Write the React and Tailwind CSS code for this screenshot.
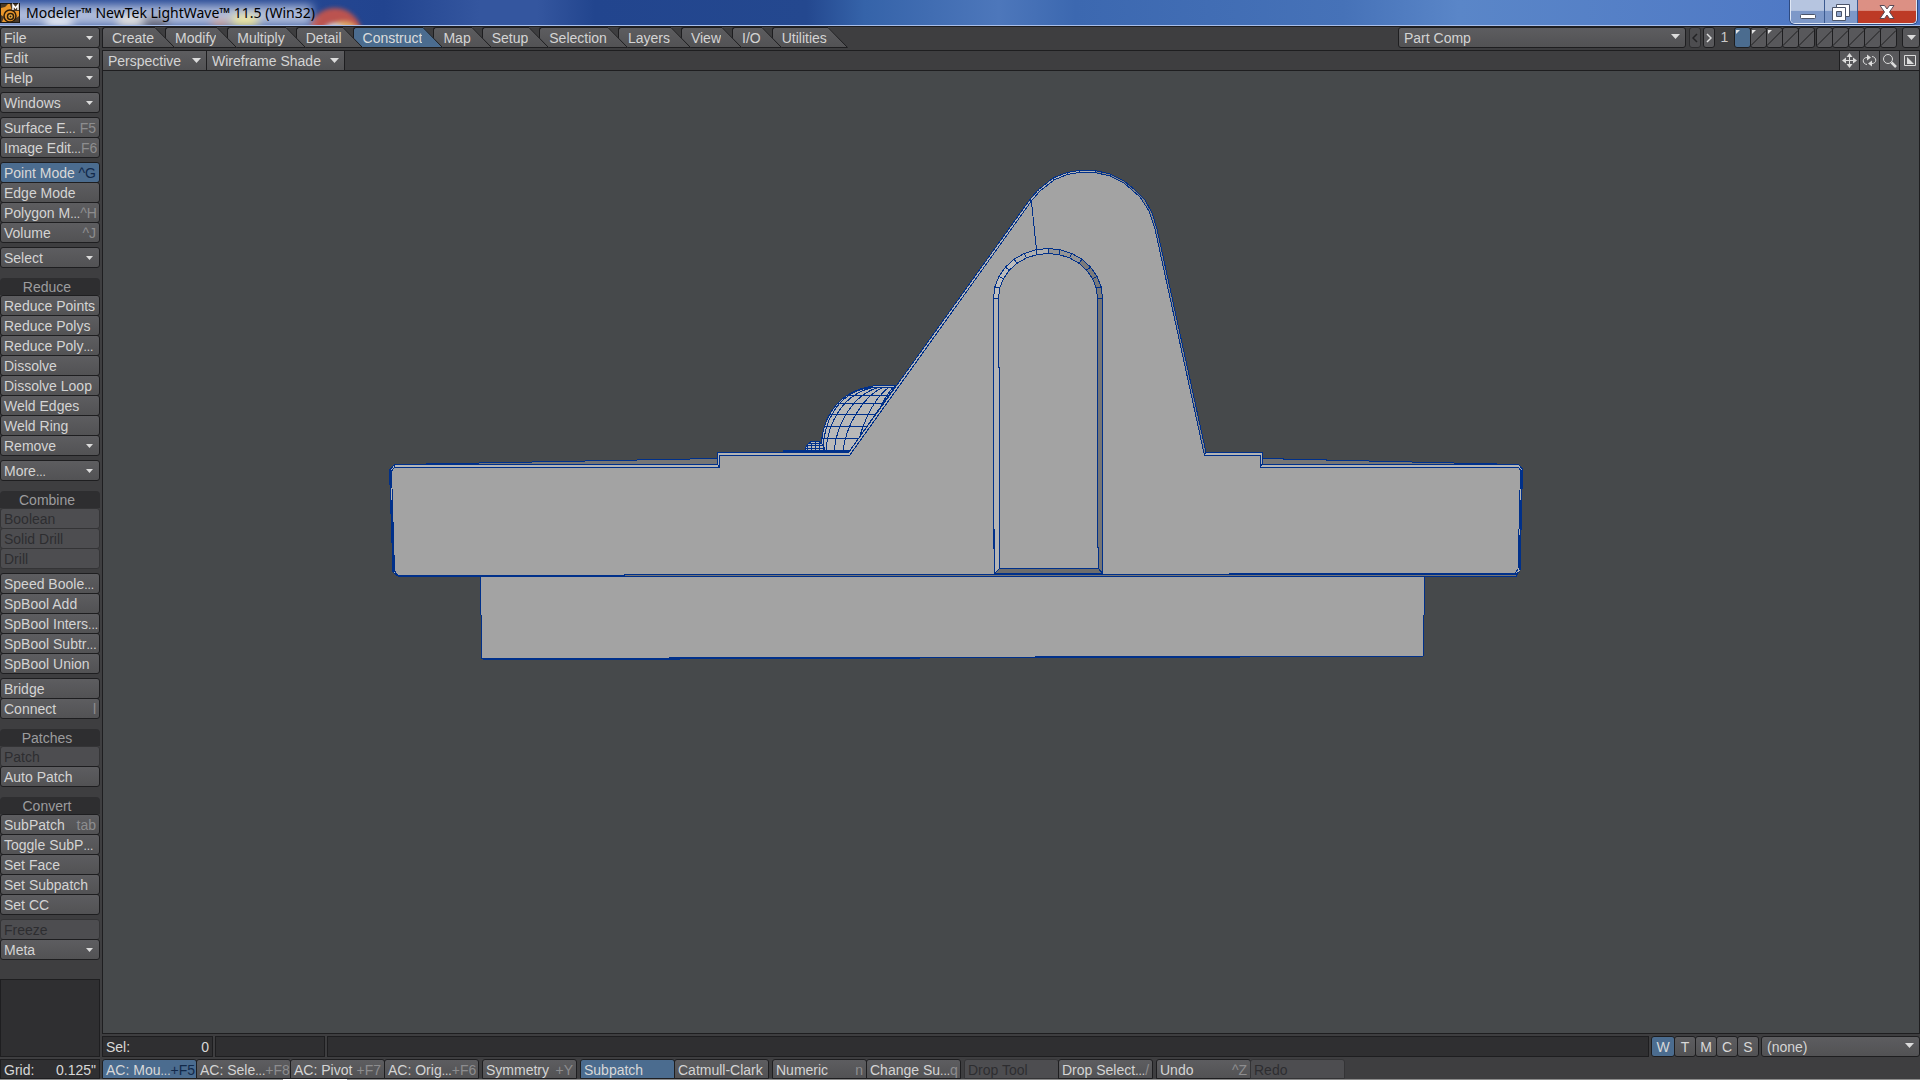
import React, { useState } from 'react';
import clsx from 'clsx';

const sidebar = [
  {
    groups: [
      [{ label: 'File', menu: true }, { label: 'Edit', menu: true }, { label: 'Help', menu: true }],
      [{ label: 'Windows', menu: true }],
      [{ label: 'Surface E', cut: true, hint: 'F5' }, { label: 'Image Edit', cut: true, hint: 'F6' }],
      [
        { label: 'Point Mode', hint: '^G', active: true },
        { label: 'Edge Mode' },
        { label: 'Polygon M', cut: true, hint: '^H' },
        { label: 'Volume', hint: '^J' },
      ],
      [{ label: 'Select', menu: true }],
    ],
  },
  {
    title: 'Reduce',
    groups: [
      [
        { label: 'Reduce Points' },
        { label: 'Reduce Polys' },
        { label: 'Reduce Poly', cut: true },
        { label: 'Dissolve' },
        { label: 'Dissolve Loop' },
        { label: 'Weld Edges' },
        { label: 'Weld Ring' },
        { label: 'Remove', menu: true },
      ],
      [{ label: 'More', cut: true, menu: true }],
    ],
  },
  {
    title: 'Combine',
    groups: [
      [
        { label: 'Boolean', disabled: true },
        { label: 'Solid Drill', disabled: true },
        { label: 'Drill', disabled: true },
      ],
      [
        { label: 'Speed Boole', cut: true },
        { label: 'SpBool Add' },
        { label: 'SpBool Inters', cut: true },
        { label: 'SpBool Subtr', cut: true },
        { label: 'SpBool Union' },
      ],
      [{ label: 'Bridge' }, { label: 'Connect', hint: 'l' }],
    ],
  },
  {
    title: 'Patches',
    groups: [[{ label: 'Patch', disabled: true }, { label: 'Auto Patch' }]],
  },
  {
    title: 'Convert',
    groups: [
      [
        { label: 'SubPatch', hint: 'tab' },
        { label: 'Toggle SubP', cut: true },
        { label: 'Set Face' },
        { label: 'Set Subpatch' },
        { label: 'Set CC' },
      ],
      [{ label: 'Freeze', disabled: true }, { label: 'Meta', menu: true }],
    ],
  },
];

const tabs = ['Create', 'Modify', 'Multiply', 'Detail', 'Construct', 'Map', 'Setup', 'Selection', 'Layers', 'View', 'I/O', 'Utilities'];

const toolbar = [
  [
    { label: 'AC: Mou', cut: true, hint: '+F5', active: true },
    { label: 'AC: Sele', cut: true, hint: '+F8' },
    { label: 'AC: Pivot', hint: '+F7' },
    { label: 'AC: Orig', cut: true, hint: '+F6' },
  ],
  [{ label: 'Symmetry', hint: '+Y' }],
  [{ label: 'Subpatch', active: true }, { label: 'Catmull-Clark' }],
  [{ label: 'Numeric', hint: 'n' }, { label: 'Change Su', cut: true, hint: 'q' }],
  [{ label: 'Drop Tool', disabled: true }, { label: 'Drop Select', cut: true, hint: '/' }],
  [{ label: 'Undo', hint: '^Z' }, { label: 'Redo', disabled: true }],
];

function Arrow({ className }) {
  return (
    <svg viewBox="0 0 9 5" className={clsx('shrink-0 fill-[#dcdcdc]', className)} aria-hidden="true">
      <path d="M0 0H9L4.5 5Z" />
    </svg>
  );
}

function ToolButton({ item, className }) {
  const { label, cut, hint, menu, active, disabled } = item;
  return (
    <button
      type="button"
      disabled={disabled}
      className={clsx(
        'flex items-center justify-between overflow-hidden whitespace-nowrap rounded-[3px] border px-[3px] text-left text-sm leading-4',
        active && 'border-[#1e1e20] bg-[#4b6c8f] text-[#d8d8d8]',
        disabled && 'border-[#343436] bg-[#4d4d50] text-[#2d2d30]',
        !active && !disabled && 'border-[#1e1e20] bg-linear-to-b from-[#5d5d60] to-[#525254] text-[#d4d4d4]',
        className
      )}
    >
      <span>
        {label}
        {cut && <span className="text-xs leading-none">...</span>}
      </span>
      {hint && <span className={active ? 'text-[#12294a]' : 'text-[#8d8d8f]'}>{hint}</span>}
      {menu && <Arrow className="mr-[3px] h-1 w-[7px]" />}
    </button>
  );
}

function Picker({ label, options, className, selectClass }) {
  return (
    <div className={clsx('relative flex', className)}>
      <select
        aria-label={label}
        className={clsx('w-full appearance-none bg-linear-to-b from-[#5d5d60] to-[#525254] pl-[5px] text-sm leading-4 text-[#d4d4d4] outline-none', selectClass)}
      >
        {options.map((o) => (
          <option key={o}>{o}</option>
        ))}
      </select>
      <Arrow className="pointer-events-none absolute right-[6px] top-[7px] h-[5px] w-[9px]" />
    </div>
  );
}

function Tab({ label, active, onClick, z }) {
  return (
    <button type="button" onClick={onClick} className="relative -mr-[10px] flex h-[21px] last:mr-0" style={{ zIndex: z }}>
      <span
        className={clsx(
          'flex h-full items-center rounded-tl-[3px] border-y border-l border-[#1e1e20] pl-[9px] pt-px text-sm leading-4',
          active ? 'bg-[#4b6c8f] text-[#dcdcdc]' : 'bg-linear-to-b from-[#5d5d60] to-[#525254] text-[#d4d4d4]'
        )}
      >
        {label}
      </span>
      <svg viewBox="0 0 21 21" className="h-[21px] w-[21px]" aria-hidden="true">
        <defs>
          <linearGradient id="tabFill" x1="0" y1="0" x2="0" y2="1">
            <stop offset="0" stopColor="#5d5d60" />
            <stop offset="1" stopColor="#525254" />
          </linearGradient>
        </defs>
        <path d="M0 0H1L21 21H0Z" fill={active ? '#4b6c8f' : 'url(#tabFill)'} />
        <path d="M0 .5H1L20.500 20.500H0" fill="none" stroke="#1e1e20" />
      </svg>
    </button>
  );
}

function TitleBar() {
  return (
    <header className="relative flex h-[26px] shrink-0 items-start justify-between overflow-hidden border-b border-[#a9bfea] bg-[#24488f]">
      <svg viewBox="0 0 1920 25" preserveAspectRatio="none" className="absolute inset-0 h-full w-full" aria-hidden="true">
        <defs>
          <linearGradient id="sky" x1="0" y1="0" x2="1" y2="0">
            <stop offset="0" stopColor="#2c4f9c" />
            <stop offset=".2" stopColor="#22448f" />
            <stop offset=".25" stopColor="#34569f" />
            <stop offset=".28" stopColor="#34569f" />
            <stop offset=".31" stopColor="#22458e" />
            <stop offset=".42" stopColor="#24488f" />
            <stop offset=".45" stopColor="#3563a9" />
            <stop offset=".52" stopColor="#4d77bb" />
            <stop offset=".56" stopColor="#3c68b0" />
            <stop offset=".7" stopColor="#4672b8" />
            <stop offset=".76" stopColor="#5a86c8" />
            <stop offset="1" stopColor="#4b74c4" />
          </linearGradient>
          <filter id="soft" x="-20%" y="-80%" width="140%" height="260%">
            <feGaussianBlur stdDeviation="5" />
          </filter>
          <filter id="faint" x="-20%" y="-80%" width="140%" height="260%">
            <feGaussianBlur stdDeviation="2" />
          </filter>
        </defs>
        <path fill="url(#sky)" d="M0 0H1920V25H0Z" />
        <circle cx="335" cy="35" r="27" fill="#bb5350" filter="url(#faint)" />
        <circle cx="344" cy="39" r="18" fill="#dfa868" filter="url(#faint)" />
        <circle cx="334" cy="36" r="13" fill="#c9c6d6" filter="url(#faint)" />
        <g filter="url(#soft)">
          <path fill="#c3cee5" d="M-10 5H312V26H-10Z" opacity=".85" />
          <path fill="#e9e6e0" d="M118 16H142V28H118Z" />
          <path fill="#6f6a70" d="M143 18H168V28H143Z" />
          <path fill="#efe8a0" d="M232 14H258V28H232Z" />
          <path fill="#dfa98a" d="M212 20H228V28H212Z" />
          <path fill="#ffffff" d="M46 19H72V28H46Z" />
        </g>
      </svg>
      <div className="relative flex h-[26px] items-center gap-[6px]">
        <svg viewBox="0 0 20 20" className="h-5 w-5" aria-hidden="true">
          <path fill="#1b1712" d="M0 0H20V20H0Z" />
          <path fill="#e8952b" d="M1 1H19V19H1Z" />
          <path fill="#4b3a28" d="M1 1H8L5 4L1 5ZM10 1H19V8H12ZM1 12L4 14L2 19H1ZM15 16L19 13V19H13Z" />
          <circle cx="10" cy="13" r="6" fill="none" stroke="#2b1c0b" strokeWidth="1.500" />
          <circle cx="10.500" cy="13.500" r="3" fill="#f5b548" stroke="#2b1c0b" strokeWidth="1.500" />
          <circle cx="10.500" cy="13.500" r="1" fill="#2b1c0b" />
          <path d="M13 7V2L15.500 5L18 2V7" fill="none" stroke="#fff" strokeWidth="1.500" />
        </svg>
        <h1 className="whitespace-nowrap font-['Noto_Sans','Open_Sans',sans-serif] text-sm leading-5 text-black">
          Modeler™ NewTek LightWave™ 11.5 (Win32)
        </h1>
      </div>
      <div className="relative mr-[3px] flex h-6 overflow-hidden rounded-b-[5px] border border-t-0 border-[#dfe7f5] ring-1 ring-[#2e4a80]">
        <button type="button" aria-label="Minimize" className="flex w-[34px] items-center justify-center border-r border-[#3b5a90] bg-linear-to-b from-[#b6c5e0] from-45% to-[#7d98c8] to-50%">
          <svg viewBox="0 0 18 18" className="mt-1 h-[18px] w-[18px]">
            <rect x="1.500" y="9.500" width="15" height="4" rx="1" fill="#fff" stroke="#4b5468" />
          </svg>
        </button>
        <button type="button" aria-label="Restore" className="flex w-[33px] items-center justify-center border-r border-[#3b5a90] bg-linear-to-b from-[#b6c5e0] from-45% to-[#7d98c8] to-50%">
          <svg viewBox="0 0 18 18" className="h-[18px] w-[18px]" fill="#fff" stroke="#4b5468">
            <path d="M4.500 1.500H17.500V13.500H4.500Z" />
            <path d="M.5 4.500H13.500V17.500H.5Z" />
            <path d="M4.500 8.500H9.500V13.500H4.500Z" fill="#8fa5cc" />
          </svg>
        </button>
        <button type="button" aria-label="Close" className="flex w-[58px] items-center justify-center bg-linear-to-b from-[#dc9084] from-45% to-[#bd3a26] to-50%">
          <svg viewBox="0 0 18 16" className="h-4 w-[18px]">
            <path d="M2 1.500H6.500L9 5L11.500 1.500H16L11.500 8L16 14.500H11.500L9 11L6.500 14.500H2L6.500 8Z" fill="#fff" stroke="#5a4a55" />
          </svg>
        </button>
      </div>
    </header>
  );
}

function LayerBank({ start, current, onPick }) {
  return (
    <div className="flex">
      {[0, 1, 2, 3, 4].map((i) => {
        const n = start + i;
        const on = n === current;
        return (
          <button
            key={n}
            type="button"
            aria-label={`Layer ${n}`}
            onClick={() => onPick(n)}
            className={clsx('-mr-px h-[21px] w-[17px] rounded-[3px] border border-[#1e1e20]', on ? 'bg-[#4b6c8f]' : 'bg-[#58585b]')}
          >
            <svg viewBox="0 0 15 19" className="h-[19px] w-[15px]" aria-hidden="true">
              {!on && <path d="M0 17.500L15 2.500" stroke="#1e1e20" fill="none" />}
              {n <= 3 && <path d="M1 2H5L1 6Z" fill="#e4e4e4" />}
            </svg>
          </button>
        );
      })}
    </div>
  );
}

// point on the door arch, angle in degrees from the left spring line
function archPoint(rx, ry, deg) {
  const a = (deg * Math.PI) / 180;
  return [1048 - rx * Math.cos(a), 298 - ry * Math.sin(a)];
}

const archSteps = Array.from({ length: 14 }, (_, i) => {
  const a = (i * 180) / 14;
  const b = ((i + 1) * 180) / 14;
  const pts = [archPoint(54.5, 49.5, a), archPoint(54.5, 49.5, b), archPoint(49.5, 44.5, b), archPoint(49.5, 44.5, a)];
  return {
    points: pts.map((p) => p.join(',')).join(' '),
    fill: i < 4 ? '#bdbdbd' : i < 7 ? '#b0b0b0' : i < 10 ? '#959595' : '#7a7a7a',
  };
});

function Model() {
  return (
    <svg viewBox="103 71 1816 962" className="block min-h-0 w-full flex-1 bg-[#46494b]" shapeRendering="crispEdges" stroke="#00308a" fill="none" role="img" aria-label="Perspective view">
      <defs>
        <clipPath id="dome">
          <path d="M821 452C821 415 840 386 885 385H896L849 452Z" />
        </clipPath>
      </defs>

      {/* ball behind the left slope */}
      <path d="M821 452C821 415 840 386 885 385H896L849 452Z" fill="#b9b9b9" />
      <g clipPath="url(#dome)">
        {[387, 395, 403, 414, 426, 438].map((y) => (
          <path key={y} d={`M818 ${y}.5H900`} />
        ))}
        <path d="M823 452C823 424 836 392 872 387M826 452C827 424 843 392 876 387M834 452C836 426 852 394 880 387M843 452C845 428 862 396 884 387M857 452C859 430 872 400 889 387M872 430C876 415 884 398 893 387" />
      </g>
      <path d="M805 451C806 444 810 441 815 441S824 444 825 451Z" fill="#b9b9b9" />
      <path d="M806 448.500H824M807 445.500H823M809 443.500H821M811.500 451V443M815.500 451V441M819.500 451V443M823.500 451V445M807.500 451V445" />
      <path d="M783 451H850" strokeWidth="2" />

      {/* base */}
      <path d="M480.500 576V600L481.500 630V658.500L1423.500 656L1424.500 576Z" fill="#a3a3a3" />
      <path d="M483 659.500H680M552 658.500H920M677 657.500H1240M1035 656.500H1423" />

      {/* far top edges */}
      <path d="M400 464.500L717 458.500V465Z" fill="#757575" />
      <path d="M1262 458.500L1518 464.500H1262Z" fill="#757575" />

      {/* body */}
      <path
        d="M394.500 464.500H717.500V452.500H848.500L1029.500 200L1038 190L1053 178L1067 172.500L1079 170.500H1095L1110 174L1124 181L1135 190L1145 200L1152 213L1157 229L1206 452.500H1262V464.500H1518.500L1522.500 469L1520 571L1516 574.500L1240 576.500H398.500L393 572L389.500 470Z"
        fill="#b4b4b4"
      />
      <path d="M1095 170.500L1110 174L1124 181L1135 190L1145 200L1152 213L1157 229L1206 452.500L1204 455L1155 229L1149 211L1140 197L1124 183L1110 176L1095 172.500Z" fill="#858585" />
      <path d="M398 574.500H1517L1516 576.500H398Z" fill="#757575" />
      <path
        d="M394.500 467.500H719.500V455.500H849.500L961 299.500L1031 201.500L1040 191L1054 180L1067 174.500L1079 172.500H1095L1110 176L1124 183L1140 197L1149 211L1155 229L1204.500 455.500H1260.500V467.500H1518.500L1520.500 470L1518 569L1515 573.500H1230L1229 574.500H625L624 575.500H398L394.500 571L391.500 471Z"
        fill="#a3a3a3"
      />
      <path d="M390 470L394.500 464.500V467.500M717.500 464.500L719.500 467.500M1262 464.500L1260 467.500M390.500 470V505M391.500 500V525M392.500 520V545M393.500 540V572M1521.500 470V510M1520.500 500V540M1519.500 535V570" />
      <path d="M1053 178V180M1067 172V174M1079 170V173M1095 170V173M1110 174V176M1038 190L1040 192M1030 200L1032 202" />
      <path d="M1031.500 202L1036.500 250" />

      {/* door */}
      <path d="M993.500 298V540L994.500 541V573.500L999.500 568.500V368L998.500 367V298Z" fill="#b5b5b5" />
      <path d="M1097.500 298H1102.500V573.500L1098.500 568.500V548L1097.500 547Z" fill="#757575" />
      <path d="M999.500 568.500H1098.500L1102.500 573.500H994.500Z" fill="#6d6d6d" />
      {archSteps.map((s) => (
        <polygon key={s.points} points={s.points} fill={s.fill} />
      ))}
      <path d="M995 574H1103M994 529V549" strokeWidth="2" />
    </svg>
  );
}

// one square control at the right end of the viewport header
function ViewButton({ label, children }) {
  return (
    <button type="button" aria-label={label} className="flex h-[19px] w-5 items-center justify-center border-l border-[#1e1e20] bg-[#58585b]">
      <svg viewBox="0 0 15 15" className="h-[15px] w-[15px]" fill="none" stroke="#dcdcdc">
        {children}
      </svg>
    </button>
  );
}

export default function App() {
  const [tab, setTab] = useState('Construct');
  const [layer, setLayer] = useState(1);
  const [vmap, setVmap] = useState('W');

  return (
    <div className="flex h-screen min-h-[1080px] flex-col bg-[#3e3e40] font-['Liberation_Sans',Arial,sans-serif] text-sm">
      <TitleBar />

      <div className="flex min-h-0 flex-1 border-t border-[#1e1e20]">
        <aside className="flex w-[102px] shrink-0 flex-col pr-[2px]">
          <nav className="flex flex-col gap-[10px]">
            {sidebar.map((section, i) => (
              <section key={i} className="flex flex-col">
                {section.title && (
                  <h2 className="h-[17px] rounded-t-[4px] bg-[#2e2e30] pr-[6px] text-center text-sm leading-[18px] text-[#9c9c9e]">{section.title}</h2>
                )}
                <div className="flex flex-col gap-1">
                  {section.groups.map((group, g) => (
                    <div key={g} className="flex flex-col pb-px">
                      {group.map((item) => (
                        <ToolButton key={item.label} item={item} className="-mb-px h-[21px] pt-px" />
                      ))}
                    </div>
                  ))}
                </div>
              </section>
            ))}
          </nav>
          <div className="mt-[19px] flex-1 border border-[#1e1e20] bg-[#2f2f31]" />
          <dl className="mt-[2px] flex h-5 items-center justify-between border border-[#1e1e20] bg-[#2f2f31] px-[3px] pt-[2px] text-[#d8d8d8]">
            <dt>Grid:</dt>
            <dd>0.125"</dd>
          </dl>
        </aside>

        <main className="flex min-w-0 flex-1 flex-col">
          <div className="mb-[2px] flex h-[21px] justify-between">
            <div className="isolate flex">
              {tabs.map((t, i) => (
                <Tab key={t} label={t} active={t === tab} onClick={() => setTab(t)} z={20 - i} />
              ))}
            </div>
            <div className="flex">
              <Picker label="Object" options={['Part Comp']} className="mr-[3px] w-[288px]" selectClass="rounded-[3px] border border-[#1e1e20]" />
              <button type="button" disabled aria-label="Previous layer bank" className="mr-[2px] flex w-3 items-center justify-center rounded-[3px] border border-[#2c2c2e] bg-[#4d4d50]">
                <svg viewBox="0 0 6 10" className="h-[10px] w-[6px]"><path d="M5 1L1 5L5 9" fill="none" stroke="#232325" strokeWidth="1.500" /></svg>
              </button>
              <button type="button" aria-label="Next layer bank" className="flex w-3 items-center justify-center rounded-[3px] border border-[#1e1e20] bg-[#58585b]">
                <svg viewBox="0 0 6 10" className="h-[10px] w-[6px]"><path d="M1 1L5 5L1 9" fill="none" stroke="#e0e0e0" strokeWidth="1.500" /></svg>
              </button>
              <span className="w-[19px] text-center leading-[21px] text-[#c8c8c8]">1</span>
              <div className="flex gap-[2px] pr-[6px]">
                <LayerBank start={1} current={layer} onPick={setLayer} />
                <LayerBank start={6} current={layer} onPick={setLayer} />
              </div>
              <button type="button" aria-label="Layer options" className="flex w-[18px] items-center justify-center rounded-[3px] border border-[#1e1e20] bg-[#58585b]">
                <Arrow className="h-[5px] w-[9px]" />
              </button>
            </div>
          </div>

          <section className="flex min-h-0 flex-1 flex-col border border-[#1e1e20]">
            <div className="flex h-5 shrink-0 justify-between border-b border-[#1e1e20]">
              <div className="flex">
                <Picker label="View type" options={['Perspective']} className="w-[104px]" selectClass="border-r border-[#1e1e20]" />
                <Picker label="Render style" options={['Wireframe Shade']} className="w-[138px]" selectClass="border-r border-[#1e1e20]" />
              </div>
              <div className="flex">
                <ViewButton label="Pan">
                  <path d="M7.500 2V13M2 7.500H13" />
                  <path fill="#dcdcdc" stroke="none" d="M7.500 0L10.500 4H4.500ZM7.500 15L4.500 11H10.500ZM0 7.500L4 4.500V10.500ZM15 7.500L11 10.500V4.500Z" />
                </ViewButton>
                <ViewButton label="Rotate">
                  <path d="M5 11.500C0 11 0 4.500 5 4.500H6M10 3.500C15 4 15 10.500 10 10.500H9" />
                  <path fill="#dcdcdc" stroke="none" d="M5 1.500L9 4.500L5 7.500ZM10 7.500L6 10.500L10 13.500Z" />
                </ViewButton>
                <ViewButton label="Zoom">
                  <circle cx="6" cy="6" r="4.500" />
                  <path strokeWidth="2.500" d="M9.500 9.500L14 14" />
                </ViewButton>
                <ViewButton label="Maximize">
                  <path d="M2.500 2.500H13.500V12.500H2.500Z" />
                  <path fill="#dcdcdc" stroke="none" d="M5 4L12 11H5Z" />
                </ViewButton>
              </div>
            </div>
            <Model />
          </section>

          <div className="mt-[2px] flex h-[21px] shrink-0 text-[#d8d8d8]">
            <dl className="mr-[2px] flex w-[111px] items-center justify-between border border-[#1e1e20] bg-[#2f2f31] px-[3px] pt-px">
              <dt>Sel:</dt>
              <dd>0</dd>
            </dl>
            <div className="mr-[2px] w-[110px] border border-[#1e1e20] bg-[#2f2f31]" />
            <div className="mr-[2px] flex-1 border border-[#1e1e20] bg-[#2f2f31]" />
            <div className="mr-[2px] flex">
              {['W', 'T', 'M', 'C', 'S'].map((k) => (
                <button
                  key={k}
                  type="button"
                  onClick={() => setVmap(k)}
                  className={clsx(
                    '-mr-px flex w-[22px] items-center justify-center rounded-[3px] border border-[#1e1e20] pt-px first:w-6 last:mr-0',
                    vmap === k ? 'bg-[#4b6c8f]' : 'bg-linear-to-b from-[#5d5d60] to-[#525254]'
                  )}
                >
                  {k}
                </button>
              ))}
            </div>
            <Picker label="Vertex map" options={['(none)']} className="w-[159px]" selectClass="rounded-[3px] border border-[#1e1e20]" />
          </div>

          <div className="mt-[2px] flex h-5 shrink-0 gap-[3px]">
            {toolbar.map((group, g) => (
              <div key={g} className="flex pr-px">
                {group.map((item) => (
                  <ToolButton key={item.label} item={item} className="-mr-px w-[95px] rounded-b-none pt-[2px]" />
                ))}
              </div>
            ))}
          </div>
        </main>
      </div>

      <footer className="flex h-px shrink-0 bg-[#8c8c8c]">
        <div className="ml-[283px] w-16 bg-white" />
      </footer>
    </div>
  );
}
